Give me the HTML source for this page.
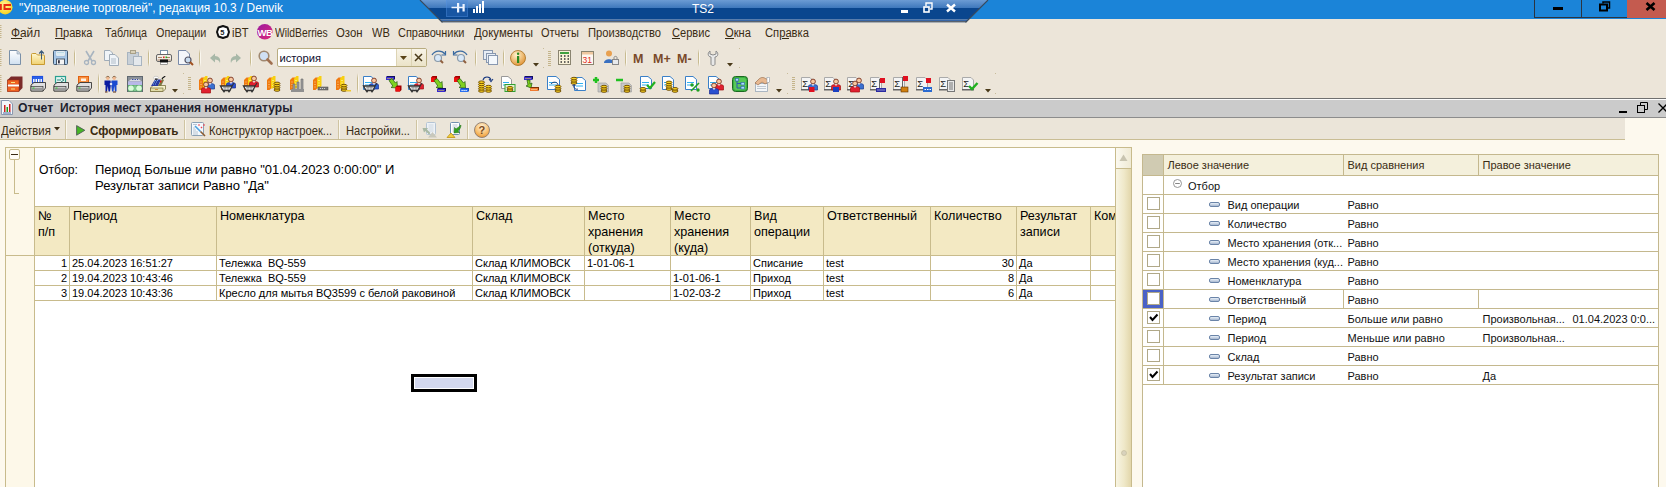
<!DOCTYPE html><html><head><meta charset="utf-8"><style>
*{margin:0;padding:0;box-sizing:border-box}
html,body{width:1666px;height:487px;overflow:hidden;background:#fdf9ee;font-family:"Liberation Sans",sans-serif;position:relative}
.a{position:absolute}
.t{position:absolute;white-space:pre;line-height:1}
svg{position:absolute;overflow:visible}
</style></head><body><div class="a" style="left:0px;top:0px;width:1666px;height:19px;background:#1b84d8"></div>
<div class="a" style="left:0px;top:19px;width:1666px;height:79px;background:#ece5d9"></div>
<div class="a" style="left:0px;top:98px;width:1666px;height:1px;background:#707070"></div>
<div class="a" style="left:0px;top:99px;width:1666px;height:1px;background:#fcfcfc"></div>
<svg style="left:0px;top:0px" width="14" height="18" viewBox="0 0 14 18"><defs><radialGradient id="c1g" cx="0.45" cy="0.35" r="0.7"><stop offset="0" stop-color="#fff6a0"/><stop offset="1" stop-color="#f8d010"/></radialGradient></defs><circle cx="5.2" cy="7.2" r="7.3" fill="url(#c1g)"/><rect x="0" y="4" width="1.8" height="6" fill="#e82a10"/><path d="M11 5 H4.5 V9 H11" fill="none" stroke="#e82a10" stroke-width="2"/></svg>
<div class="t" style="left:18.5px;top:2.14px;font-size:12px;color:#fff;font-weight:400;transform:scaleX(0.9896);transform-origin:0 0;">"Управление торговлей", редакция 10.3 / Denvik</div>
<div class="a" style="left:1534px;top:0px;width:93px;height:18px;border-left:1px solid #2b3440;border-bottom:1px solid #2b3440;background:#1b84d8"></div>
<div class="a" style="left:1581px;top:0px;width:1px;height:18px;background:#2b3440"></div>
<div class="a" style="left:1627px;top:0px;width:39px;height:18px;background:#c45b4f"></div>
<div class="a" style="left:1553px;top:7px;width:10px;height:3px;background:#000"></div>
<svg style="left:1599px;top:1px" width="12" height="11" viewBox="0 0 12 11"><rect x="1" y="3.5" width="7" height="6" fill="none" stroke="#000" stroke-width="2"/><path d="M4 2.5 V1 H10.5 V7 H9" fill="none" stroke="#000" stroke-width="1.5"/></svg>
<svg style="left:1645px;top:2px" width="11" height="9" viewBox="0 0 11 9"><path d="M1.5 1 L9.5 8 M9.5 1 L1.5 8" stroke="#000" stroke-width="2.6"/></svg>
<svg style="left:418px;top:0px" width="572" height="24" viewBox="0 0 572 24"><defs><linearGradient id="rg" x1="0" y1="0" x2="0" y2="1">
<stop offset="0" stop-color="#6c9cd4"/><stop offset="1" stop-color="#3e78bc"/></linearGradient>
<clipPath id="rc"><polygon points="2,0 570,0 547,23 25,23"/></clipPath></defs>
<g clip-path="url(#rc)"><rect x="0" y="0" width="572" height="8" fill="url(#rg)"/><rect x="0" y="8" width="572" height="11.5" fill="#0a468e"/>
<rect x="0" y="19.5" width="572" height="1.5" fill="#3866a6"/><rect x="0" y="21" width="572" height="1" fill="#5a626c"/><rect x="0" y="22" width="572" height="1" fill="#a8aeb4"/></g>
<path d="M2 0 L24.5 22.5 M570 0 L547.5 22.5" stroke="#3a4a5c" stroke-width="1.1"/></svg>
<div class="a" style="left:446px;top:0px;width:22px;height:17px;background:rgba(60,130,220,0.28);border:1px solid rgba(90,150,230,0.35);border-top:none"></div>
<svg style="left:451px;top:3px" width="15" height="10" viewBox="0 0 15 10"><path d="M0.5 4.5 H7 M12 4.5 H7" stroke="#eef4ff" stroke-width="1.6"/><rect x="6" y="0" width="2.2" height="9.5" fill="#eef4ff"/><rect x="11.5" y="1" width="2.2" height="7.5" fill="#eef4ff"/></svg>
<svg style="left:473px;top:1px" width="12" height="12" viewBox="0 0 12 12"><rect x="0" y="8" width="2" height="4" fill="#fff"/><rect x="3" y="5" width="2" height="7" fill="#fff"/><rect x="6" y="3" width="2" height="9" fill="#fff"/><rect x="9" y="0" width="2" height="12" fill="#fff"/></svg>
<div class="t" style="left:692px;top:2.84px;font-size:12px;color:#fff;font-weight:400;">TS2</div>
<div class="a" style="left:901px;top:10px;width:7px;height:2.5px;background:#fff"></div>
<svg style="left:923px;top:2px" width="10" height="11" viewBox="0 0 10 11"><rect x="1" y="5" width="5" height="5" fill="none" stroke="#fff" stroke-width="1.6"/><path d="M3 4 V1 H9 V7 H7" fill="none" stroke="#fff" stroke-width="1.4"/></svg>
<svg style="left:946px;top:4px" width="10" height="8" viewBox="0 0 10 8"><path d="M1 0.5 L9 7.5 M9 0.5 L1 7.5" stroke="#fff" stroke-width="2.4"/></svg>
<div class="t" style="left:10.7px;top:26.84px;font-size:12px;color:#3a2c14;font-weight:400;transform:scaleX(0.9889);transform-origin:0 0;">Файл</div>
<div class="t" style="left:54.7px;top:26.84px;font-size:12px;color:#3a2c14;font-weight:400;transform:scaleX(0.9255);transform-origin:0 0;">Правка</div>
<div class="t" style="left:105.1px;top:26.84px;font-size:12px;color:#3a2c14;font-weight:400;transform:scaleX(0.8944);transform-origin:0 0;">Таблица</div>
<div class="t" style="left:156.0px;top:26.84px;font-size:12px;color:#3a2c14;font-weight:400;transform:scaleX(0.8977);transform-origin:0 0;">Операции</div>
<div class="t" style="left:232.2px;top:26.84px;font-size:12px;color:#3a2c14;font-weight:400;transform:scaleX(0.9235);transform-origin:0 0;">iBT</div>
<div class="t" style="left:274.8px;top:26.84px;font-size:12px;color:#3a2c14;font-weight:400;transform:scaleX(0.8601);transform-origin:0 0;">WildBerries</div>
<div class="t" style="left:336.2px;top:26.84px;font-size:12px;color:#3a2c14;font-weight:400;transform:scaleX(0.9476);transform-origin:0 0;">Озон</div>
<div class="t" style="left:371.5px;top:26.84px;font-size:12px;color:#3a2c14;font-weight:400;transform:scaleX(0.9267);transform-origin:0 0;">WB</div>
<div class="t" style="left:398.0px;top:26.84px;font-size:12px;color:#3a2c14;font-weight:400;transform:scaleX(0.9135);transform-origin:0 0;">Справочники</div>
<div class="t" style="left:473.5px;top:26.84px;font-size:12px;color:#3a2c14;font-weight:400;transform:scaleX(0.9530);transform-origin:0 0;">Документы</div>
<div class="t" style="left:540.5px;top:26.84px;font-size:12px;color:#3a2c14;font-weight:400;transform:scaleX(0.9139);transform-origin:0 0;">Отчеты</div>
<div class="t" style="left:587.5px;top:26.84px;font-size:12px;color:#3a2c14;font-weight:400;transform:scaleX(0.9320);transform-origin:0 0;">Производство</div>
<div class="t" style="left:671.5px;top:26.84px;font-size:12px;color:#3a2c14;font-weight:400;transform:scaleX(0.9228);transform-origin:0 0;">Сервис</div>
<div class="t" style="left:724.5px;top:26.84px;font-size:12px;color:#3a2c14;font-weight:400;transform:scaleX(0.9297);transform-origin:0 0;">Окна</div>
<div class="t" style="left:764.5px;top:26.84px;font-size:12px;color:#3a2c14;font-weight:400;transform:scaleX(0.9332);transform-origin:0 0;">Справка</div>
<div class="a" style="left:11px;top:38px;width:11px;height:1px;background:#3a2c14"></div>
<div class="a" style="left:55px;top:38px;width:9px;height:1px;background:#3a2c14"></div>
<div class="a" style="left:672px;top:38px;width:8px;height:1px;background:#3a2c14"></div>
<div class="a" style="left:725px;top:38px;width:9px;height:1px;background:#3a2c14"></div>
<div class="a" style="left:782px;top:38px;width:7px;height:1px;background:#3a2c14"></div>
<svg style="left:216px;top:25px" width="14" height="14" viewBox="0 0 14 14"><polygon points="7,1 11.5,2.5 13,7 11.5,11.5 7,13 2.5,11.5 1,7 2.5,2.5" fill="#fff" stroke="#111" stroke-width="2" stroke-linejoin="round"/><text x="4.3" y="10" font-size="7.5" font-weight="700" font-family="Liberation Sans" fill="#222">5</text></svg>
<svg style="left:257px;top:24px" width="16" height="16" viewBox="0 0 16 16"><defs><linearGradient id="wbg" x1="0" y1="0" x2="1" y2="1"><stop offset="0" stop-color="#9a1aa0"/><stop offset="1" stop-color="#e02a7a"/></linearGradient></defs><circle cx="7.8" cy="7.8" r="7.8" fill="url(#wbg)"/><text x="0.6" y="11.5" font-size="9.5" font-weight="700" font-family="Liberation Sans" fill="#fff" letter-spacing="-0.6">WB</text></svg>
<div class="a" style="left:0px;top:100px;width:1666px;height:17px;background:#cbcbcb"></div>
<div class="a" style="left:0px;top:117px;width:1666px;height:1px;background:#8c8c8c"></div>
<svg style="left:1px;top:100px" width="12" height="15" viewBox="0 0 12 15"><path d="M0.5 0.5 H8 L11.5 4 V14.5 H0.5 Z" fill="#f4f6fa" stroke="#8a98b0"/><rect x="3" y="5" width="1.5" height="7" fill="#d02020"/><rect x="5.5" y="7" width="1.5" height="5" fill="#20a020"/><rect x="8" y="4" width="1.5" height="8" fill="#d02020"/><rect x="2" y="12.5" width="8" height="1" fill="#4a6aa0"/></svg>
<div class="t" style="left:17.6px;top:101.84px;font-size:12px;color:#1e1e2e;font-weight:700;transform:scaleX(1.0155);transform-origin:0 0;">Отчет</div>
<div class="t" style="left:60.3px;top:101.84px;font-size:12px;color:#1e1e2e;font-weight:700;transform:scaleX(1.0010);transform-origin:0 0;">История мест хранения номенклатуры</div>
<div class="a" style="left:1619px;top:111px;width:8px;height:2px;background:#000"></div>
<svg style="left:1637px;top:102px" width="12" height="12" viewBox="0 0 12 12"><rect x="0.5" y="3.5" width="7" height="7" fill="none" stroke="#000"/><path d="M3.5 3.5 V0.5 H10.5 V7.5 H7.5" fill="none" stroke="#000"/></svg>
<svg style="left:1658px;top:103px" width="10" height="10" viewBox="0 0 10 10"><path d="M0.5 0.5 L9.5 9.5 M9.5 0.5 L0.5 9.5" stroke="#000" stroke-width="1.3"/></svg>
<div class="a" style="left:0px;top:118px;width:1625px;height:22px;background:#ebe5d9;border-bottom:1px solid #c9bd94"></div>
<div class="t" style="left:0.7px;top:124.84px;font-size:12px;color:#3a2c14;font-weight:400;transform:scaleX(0.9481);transform-origin:0 0;">Действия</div>
<svg style="left:54px;top:127px" width="7" height="4" viewBox="0 0 7 4"><path d="M0 0 H6 L3 3.5 Z" fill="#3a2c14"/></svg>
<div class="a" style="left:65px;top:120px;width:2px;height:19px;background:linear-gradient(90deg,#cfc4a2 50%,#faf7ee 50%)"></div>
<div class="a" style="left:184px;top:120px;width:2px;height:19px;background:linear-gradient(90deg,#cfc4a2 50%,#faf7ee 50%)"></div>
<div class="a" style="left:338px;top:120px;width:2px;height:19px;background:linear-gradient(90deg,#cfc4a2 50%,#faf7ee 50%)"></div>
<div class="a" style="left:416px;top:120px;width:2px;height:19px;background:linear-gradient(90deg,#cfc4a2 50%,#faf7ee 50%)"></div>
<div class="a" style="left:467px;top:120px;width:2px;height:19px;background:linear-gradient(90deg,#cfc4a2 50%,#faf7ee 50%)"></div>
<svg style="left:76px;top:125px" width="10" height="11" viewBox="0 0 10 11"><path d="M0.6 0.6 L8.8 5.3 L0.6 10.2 Z" fill="#46b626" stroke="#505a58" stroke-width="0.9" stroke-linejoin="round"/></svg>
<div class="t" style="left:89.5px;top:124.84px;font-size:12px;color:#3a2a10;font-weight:700;transform:scaleX(0.9677);transform-origin:0 0;">Сформировать</div>
<svg style="left:191px;top:122px" width="16" height="15" viewBox="0 0 16 15"><rect x="0.5" y="0.5" width="12" height="13" rx="1" fill="#f4f8fc" stroke="#8aa0b4"/><path d="M2 2.5 H6 M2 6 H4 M2 8 H5 M2 10 H7 M2 12 H7" stroke="#a8b8c8" stroke-width="0.8"/><path d="M4 4 L9.5 9.5" stroke="#4aa0e0" stroke-width="1.6"/><path d="M9.5 9.5 L14 14" stroke="#8a5a30" stroke-width="1.6"/><path d="M8 2 L9 3 L8 4 L7 3 Z M13 2 L14 3 L13 4 L12 3 Z M10.5 4.5 L11.5 5.5 L10.5 6.5 L9.5 5.5 Z" fill="#f04050"/></svg>
<div class="t" style="left:209px;top:124.84px;font-size:12px;color:#3a2c14;font-weight:400;transform:scaleX(0.9340);transform-origin:0 0;">Конструктор настроек...</div>
<div class="t" style="left:346px;top:124.84px;font-size:12px;color:#3a2c14;font-weight:400;transform:scaleX(0.9286);transform-origin:0 0;">Настройки...</div>
<svg style="left:422px;top:122px" width="17" height="16" viewBox="0 0 17 16"><rect x="4.5" y="0.5" width="9" height="12" rx="1" fill="#eef2f6" stroke="#b4c4d4"/><path d="M6.5 3 H11.5 M6.5 5 H11.5 M6.5 7 H11.5 M6.5 9 H11.5" stroke="#c4d0dc" stroke-width="0.8"/><path d="M0.5 6 H6 L5 7.5 L8.5 11 L7 12.5 L3.5 9 L2 10.5 Z" fill="#a8b8a4"/><path d="M6 15.5 L10.5 10 L15 15.5 Z" fill="#c8c8bc"/></svg>
<svg style="left:446px;top:122px" width="17" height="16" viewBox="0 0 17 16"><rect x="4.5" y="0.5" width="9" height="12" rx="1" fill="#fff" stroke="#7090b0"/><path d="M6.5 3 H11.5 M6.5 5 H11.5 M6.5 7 H10 M6.5 9 H9" stroke="#a8b8cc" stroke-width="0.8"/><path d="M15 3 C15 6 13 8 12 9 L13.5 10.5 L8 11 L8.5 5.5 L10 7 C11 6 13 5 15 3 Z" fill="#30a020" stroke="#1a6a10" stroke-width="0.5"/><path d="M1 15.5 L5 11 L9 15.5 Z" fill="#f0d040" stroke="#c09010" stroke-width="0.8"/></svg>
<svg style="left:474px;top:122px" width="17" height="17" viewBox="0 0 17 17"><defs><radialGradient id="qg" cx="0.5" cy="0.3" r="0.75"><stop offset="0" stop-color="#fff4dc"/><stop offset="0.6" stop-color="#f8c070"/><stop offset="1" stop-color="#e89028"/></radialGradient></defs><circle cx="8" cy="8" r="7.5" fill="url(#qg)" stroke="#8a7a70" stroke-width="0.9"/><text x="4.6" y="12.3" font-size="11" font-weight="700" font-family="Liberation Sans" fill="#7a4a20">?</text></svg>
<div class="a" style="left:5px;top:147px;width:1127px;height:345px;border:1px solid #c8bb8c;background:#fff"></div>
<div class="a" style="left:6px;top:148px;width:28px;height:339px;background:#fdf8e9"></div>
<div class="a" style="left:34px;top:148px;width:1px;height:339px;background:#c8bb8c"></div>
<div class="a" style="left:6px;top:255px;width:29px;height:1px;background:#c8bb8c"></div>
<div class="a" style="left:9px;top:149px;width:11px;height:11px;border:1px solid #c8bb8c;background:#fffdf6;border-radius:2px"></div>
<div class="a" style="left:11px;top:153.5px;width:7px;height:1.5px;background:#3a2c14"></div>
<div class="a" style="left:14px;top:160px;width:1px;height:33px;background:#c8bb8c"></div>
<div class="a" style="left:14px;top:193px;width:5px;height:1px;background:#c8bb8c"></div>
<div class="t" style="left:38.5px;top:162.57px;font-size:13.5px;color:#000;font-weight:400;transform:scaleX(0.9031);transform-origin:0 0;">Отбор:</div>
<div class="t" style="left:95.3px;top:162.57px;font-size:13.5px;color:#000;font-weight:400;transform:scaleX(0.9617);transform-origin:0 0;">Период Больше или равно "01.04.2023 0:00:00" И</div>
<div class="t" style="left:95.3px;top:178.57px;font-size:13.5px;color:#000;font-weight:400;transform:scaleX(0.9663);transform-origin:0 0;">Результат записи Равно "Да"</div>
<div class="a" style="left:35px;top:206px;width:1080px;height:49px;background:#f3e9c3"></div>
<div class="a" style="left:35px;top:206px;width:1080px;height:1px;background:#c8bb8c"></div>
<div class="a" style="left:35px;top:255px;width:1080px;height:1px;background:#c8bb8c"></div>
<div class="a" style="left:35px;top:270px;width:1080px;height:1px;background:#c8bb8c"></div>
<div class="a" style="left:35px;top:285px;width:1080px;height:1px;background:#c8bb8c"></div>
<div class="a" style="left:35px;top:300px;width:1080px;height:1px;background:#c8bb8c"></div>
<div class="a" style="left:69px;top:206px;width:1px;height:95px;background:#c8bb8c"></div>
<div class="a" style="left:216px;top:206px;width:1px;height:95px;background:#c8bb8c"></div>
<div class="a" style="left:472px;top:206px;width:1px;height:95px;background:#c8bb8c"></div>
<div class="a" style="left:584px;top:206px;width:1px;height:95px;background:#c8bb8c"></div>
<div class="a" style="left:670px;top:206px;width:1px;height:95px;background:#c8bb8c"></div>
<div class="a" style="left:750px;top:206px;width:1px;height:95px;background:#c8bb8c"></div>
<div class="a" style="left:823px;top:206px;width:1px;height:95px;background:#c8bb8c"></div>
<div class="a" style="left:930px;top:206px;width:1px;height:95px;background:#c8bb8c"></div>
<div class="a" style="left:1016px;top:206px;width:1px;height:95px;background:#c8bb8c"></div>
<div class="a" style="left:1090px;top:206px;width:1px;height:95px;background:#c8bb8c"></div>
<div class="t" style="left:38px;top:210.33px;font-size:12.6px;color:#000;font-weight:400;">№</div>
<div class="t" style="left:38px;top:226.33px;font-size:12.6px;color:#000;font-weight:400;">п/п</div>
<div class="t" style="left:73px;top:210.33px;font-size:12.6px;color:#000;font-weight:400;">Период</div>
<div class="t" style="left:220px;top:210.33px;font-size:12.6px;color:#000;font-weight:400;">Номенклатура</div>
<div class="t" style="left:476px;top:210.33px;font-size:12.6px;color:#000;font-weight:400;">Склад</div>
<div class="t" style="left:588px;top:210.33px;font-size:12.6px;color:#000;font-weight:400;">Место</div>
<div class="t" style="left:588px;top:226.33px;font-size:12.6px;color:#000;font-weight:400;">хранения</div>
<div class="t" style="left:588px;top:242.33px;font-size:12.6px;color:#000;font-weight:400;">(откуда)</div>
<div class="t" style="left:674px;top:210.33px;font-size:12.6px;color:#000;font-weight:400;">Место</div>
<div class="t" style="left:674px;top:226.33px;font-size:12.6px;color:#000;font-weight:400;">хранения</div>
<div class="t" style="left:674px;top:242.33px;font-size:12.6px;color:#000;font-weight:400;">(куда)</div>
<div class="t" style="left:754px;top:210.33px;font-size:12.6px;color:#000;font-weight:400;">Вид</div>
<div class="t" style="left:754px;top:226.33px;font-size:12.6px;color:#000;font-weight:400;">операции</div>
<div class="t" style="left:827px;top:210.33px;font-size:12.6px;color:#000;font-weight:400;">Ответственный</div>
<div class="t" style="left:934px;top:210.33px;font-size:12.6px;color:#000;font-weight:400;">Количество</div>
<div class="t" style="left:1020px;top:210.33px;font-size:12.6px;color:#000;font-weight:400;">Результат</div>
<div class="t" style="left:1020px;top:226.33px;font-size:12.6px;color:#000;font-weight:400;">записи</div>
<div class="t" style="left:1094px;top:210.33px;font-size:12.6px;color:#000;font-weight:400;">Ком</div>
<div class="t" style="left:34px;width:33px;top:257.69px;font-size:11px;text-align:right">1</div>
<div class="t" style="left:72px;top:257.69px;font-size:11px;color:#000;font-weight:400;">25.04.2023 16:51:27</div>
<div class="t" style="left:219px;top:257.69px;font-size:11px;color:#000;font-weight:400;">Тележка  BQ-559</div>
<div class="t" style="left:475px;top:257.69px;font-size:11px;color:#000;font-weight:400;">Склад КЛИМОВСК</div>
<div class="t" style="left:587px;top:257.69px;font-size:11px;color:#000;font-weight:400;">1-01-06-1</div>
<div class="t" style="left:753px;top:257.69px;font-size:11px;color:#000;font-weight:400;">Списание</div>
<div class="t" style="left:826px;top:257.69px;font-size:11px;color:#000;font-weight:400;">test</div>
<div class="t" style="left:930px;width:84px;top:257.69px;font-size:11px;text-align:right">30</div>
<div class="t" style="left:1019px;top:257.69px;font-size:11px;color:#000;font-weight:400;">Да</div>
<div class="t" style="left:34px;width:33px;top:272.69px;font-size:11px;text-align:right">2</div>
<div class="t" style="left:72px;top:272.69px;font-size:11px;color:#000;font-weight:400;">19.04.2023 10:43:46</div>
<div class="t" style="left:219px;top:272.69px;font-size:11px;color:#000;font-weight:400;">Тележка  BQ-559</div>
<div class="t" style="left:475px;top:272.69px;font-size:11px;color:#000;font-weight:400;">Склад КЛИМОВСК</div>
<div class="t" style="left:673px;top:272.69px;font-size:11px;color:#000;font-weight:400;">1-01-06-1</div>
<div class="t" style="left:753px;top:272.69px;font-size:11px;color:#000;font-weight:400;">Приход</div>
<div class="t" style="left:826px;top:272.69px;font-size:11px;color:#000;font-weight:400;">test</div>
<div class="t" style="left:930px;width:84px;top:272.69px;font-size:11px;text-align:right">8</div>
<div class="t" style="left:1019px;top:272.69px;font-size:11px;color:#000;font-weight:400;">Да</div>
<div class="t" style="left:34px;width:33px;top:287.69px;font-size:11px;text-align:right">3</div>
<div class="t" style="left:72px;top:287.69px;font-size:11px;color:#000;font-weight:400;">19.04.2023 10:43:36</div>
<div class="t" style="left:219px;top:287.69px;font-size:11px;color:#000;font-weight:400;">Кресло для мытья BQ3599 с белой раковиной</div>
<div class="t" style="left:475px;top:287.69px;font-size:11px;color:#000;font-weight:400;">Склад КЛИМОВСК</div>
<div class="t" style="left:673px;top:287.69px;font-size:11px;color:#000;font-weight:400;">1-02-03-2</div>
<div class="t" style="left:753px;top:287.69px;font-size:11px;color:#000;font-weight:400;">Приход</div>
<div class="t" style="left:826px;top:287.69px;font-size:11px;color:#000;font-weight:400;">test</div>
<div class="t" style="left:930px;width:84px;top:287.69px;font-size:11px;text-align:right">6</div>
<div class="t" style="left:1019px;top:287.69px;font-size:11px;color:#000;font-weight:400;">Да</div>
<div class="a" style="left:411px;top:374px;width:66px;height:18px;border:3px solid #000;background:#fff"></div>
<div class="a" style="left:415px;top:378px;width:58px;height:10px;background:#d3d8ee"></div>
<div class="a" style="left:1115px;top:148px;width:16px;height:339px;border-left:1px solid #c8bb8c;background:linear-gradient(90deg,#f8f5e4,#efe8c8 55%,#e2d6aa)"></div>
<div class="a" style="left:1116px;top:148px;width:15px;height:21px;background:linear-gradient(90deg,#fbf9f0,#efead4);border-bottom:1px solid #c8bb8c"></div>
<svg style="left:1119px;top:154px" width="9" height="8" viewBox="0 0 9 8"><path d="M0.5 7 L4.5 0.5 L8.5 7 Z" fill="#c8c4b0"/></svg>
<svg style="left:1120px;top:449px" width="8" height="8" viewBox="0 0 8 8"><circle cx="4" cy="4" r="2.5" fill="#d8d2bc" stroke="#c0b898" stroke-width="0.6"/></svg>
<div class="a" style="left:1142px;top:154px;width:517px;height:340px;border:1px solid #c4b88e;background:#fff"></div>
<div class="a" style="left:1143px;top:155px;width:515px;height:20px;background:#f4f0dc"></div>
<div class="a" style="left:1143px;top:155px;width:20px;height:20px;background:#d0cbb2"></div>
<div class="a" style="left:1143px;top:175px;width:515px;height:1px;background:#c4b88e"></div>
<div class="a" style="left:1163px;top:155px;width:1px;height:229px;background:#c4b88e"></div>
<div class="a" style="left:1343px;top:155px;width:1px;height:20px;background:#c4b88e"></div>
<div class="a" style="left:1478px;top:155px;width:1px;height:20px;background:#c4b88e"></div>
<div class="t" style="left:1167.5px;top:159.69px;font-size:11px;color:#3a2c14;font-weight:400;">Левое значение</div>
<div class="t" style="left:1347.5px;top:159.69px;font-size:11px;color:#3a2c14;font-weight:400;">Вид сравнения</div>
<div class="t" style="left:1482.5px;top:159.69px;font-size:11px;color:#3a2c14;font-weight:400;">Правое значение</div>
<div class="a" style="left:1143px;top:194px;width:515px;height:1px;background:#c4b88e"></div>
<div class="a" style="left:1143px;top:213px;width:515px;height:1px;background:#c4b88e"></div>
<div class="a" style="left:1143px;top:232px;width:515px;height:1px;background:#c4b88e"></div>
<div class="a" style="left:1143px;top:251px;width:515px;height:1px;background:#c4b88e"></div>
<div class="a" style="left:1143px;top:270px;width:515px;height:1px;background:#c4b88e"></div>
<div class="a" style="left:1143px;top:289px;width:515px;height:1px;background:#c4b88e"></div>
<div class="a" style="left:1143px;top:308px;width:515px;height:1px;background:#c4b88e"></div>
<div class="a" style="left:1143px;top:327px;width:515px;height:1px;background:#c4b88e"></div>
<div class="a" style="left:1143px;top:346px;width:515px;height:1px;background:#c4b88e"></div>
<div class="a" style="left:1143px;top:365px;width:515px;height:1px;background:#c4b88e"></div>
<div class="a" style="left:1143px;top:384px;width:515px;height:1px;background:#c4b88e"></div>
<svg style="left:1173px;top:179px" width="9" height="9" viewBox="0 0 9 9"><circle cx="4.5" cy="4.5" r="4" fill="#fff" stroke="#8a8a8a" stroke-width="0.9"/><path d="M2.2 4.5 H6.8" stroke="#777" stroke-width="0.9"/></svg>
<div class="t" style="left:1188px;top:180.69px;font-size:11px;color:#111;font-weight:400;">Отбор</div>
<div class="a" style="left:1147px;top:197px;width:13px;height:13px;border:1px solid #b0a888;background:#fff"></div>
<div class="a" style="left:1209px;top:202px;width:11px;height:5px;background:linear-gradient(#e8f0f8,#a8b8d0);border:1px solid #6a84a8;border-radius:2px"></div>
<div class="t" style="left:1227.5px;top:199.69px;font-size:11px;color:#111;font-weight:400;">Вид операции</div>
<div class="t" style="left:1347.5px;top:199.69px;font-size:11px;color:#111;font-weight:400;">Равно</div>
<div class="a" style="left:1147px;top:216px;width:13px;height:13px;border:1px solid #b0a888;background:#fff"></div>
<div class="a" style="left:1209px;top:221px;width:11px;height:5px;background:linear-gradient(#e8f0f8,#a8b8d0);border:1px solid #6a84a8;border-radius:2px"></div>
<div class="t" style="left:1227.5px;top:218.69px;font-size:11px;color:#111;font-weight:400;">Количество</div>
<div class="t" style="left:1347.5px;top:218.69px;font-size:11px;color:#111;font-weight:400;">Равно</div>
<div class="a" style="left:1147px;top:235px;width:13px;height:13px;border:1px solid #b0a888;background:#fff"></div>
<div class="a" style="left:1209px;top:240px;width:11px;height:5px;background:linear-gradient(#e8f0f8,#a8b8d0);border:1px solid #6a84a8;border-radius:2px"></div>
<div class="t" style="left:1227.5px;top:237.69px;font-size:11px;color:#111;font-weight:400;">Место хранения (отк...</div>
<div class="t" style="left:1347.5px;top:237.69px;font-size:11px;color:#111;font-weight:400;">Равно</div>
<div class="a" style="left:1147px;top:254px;width:13px;height:13px;border:1px solid #b0a888;background:#fff"></div>
<div class="a" style="left:1209px;top:259px;width:11px;height:5px;background:linear-gradient(#e8f0f8,#a8b8d0);border:1px solid #6a84a8;border-radius:2px"></div>
<div class="t" style="left:1227.5px;top:256.69px;font-size:11px;color:#111;font-weight:400;">Место хранения (куд...</div>
<div class="t" style="left:1347.5px;top:256.69px;font-size:11px;color:#111;font-weight:400;">Равно</div>
<div class="a" style="left:1147px;top:273px;width:13px;height:13px;border:1px solid #b0a888;background:#fff"></div>
<div class="a" style="left:1209px;top:278px;width:11px;height:5px;background:linear-gradient(#e8f0f8,#a8b8d0);border:1px solid #6a84a8;border-radius:2px"></div>
<div class="t" style="left:1227.5px;top:275.69px;font-size:11px;color:#111;font-weight:400;">Номенклатура</div>
<div class="t" style="left:1347.5px;top:275.69px;font-size:11px;color:#111;font-weight:400;">Равно</div>
<div class="a" style="left:1143px;top:290px;width:20px;height:18px;background:#4a62c6"></div>
<div class="a" style="left:1147px;top:292px;width:13px;height:13px;border:1px solid #b0a888;background:#fff"></div>
<div class="a" style="left:1209px;top:297px;width:11px;height:5px;background:linear-gradient(#e8f0f8,#a8b8d0);border:1px solid #6a84a8;border-radius:2px"></div>
<div class="t" style="left:1227.5px;top:294.69px;font-size:11px;color:#111;font-weight:400;">Ответственный</div>
<div class="t" style="left:1347.5px;top:294.69px;font-size:11px;color:#111;font-weight:400;">Равно</div>
<div class="a" style="left:1343px;top:289px;width:1px;height:19px;background:#c4b88e"></div>
<div class="a" style="left:1478px;top:289px;width:1px;height:19px;background:#c4b88e"></div>
<div class="a" style="left:1147px;top:311px;width:13px;height:13px;border:1px solid #b0a888;background:#fff"></div>
<svg style="left:1149px;top:313px" width="10" height="9" viewBox="0 0 10 9"><path d="M1 4 L3.5 7 L8.5 1.5" fill="none" stroke="#000" stroke-width="2"/></svg>
<div class="a" style="left:1209px;top:316px;width:11px;height:5px;background:linear-gradient(#e8f0f8,#a8b8d0);border:1px solid #6a84a8;border-radius:2px"></div>
<div class="t" style="left:1227.5px;top:313.69px;font-size:11px;color:#111;font-weight:400;">Период</div>
<div class="t" style="left:1347.5px;top:313.69px;font-size:11px;color:#111;font-weight:400;">Больше или равно</div>
<div class="t" style="left:1482.5px;top:313.69px;font-size:11px;color:#111;font-weight:400;">Произвольная...</div>
<div class="t" style="left:1572.5px;top:313.69px;font-size:11px;color:#111;font-weight:400;">01.04.2023 0:0...</div>
<div class="a" style="left:1147px;top:330px;width:13px;height:13px;border:1px solid #b0a888;background:#fff"></div>
<div class="a" style="left:1209px;top:335px;width:11px;height:5px;background:linear-gradient(#e8f0f8,#a8b8d0);border:1px solid #6a84a8;border-radius:2px"></div>
<div class="t" style="left:1227.5px;top:332.69px;font-size:11px;color:#111;font-weight:400;">Период</div>
<div class="t" style="left:1347.5px;top:332.69px;font-size:11px;color:#111;font-weight:400;">Меньше или равно</div>
<div class="t" style="left:1482.5px;top:332.69px;font-size:11px;color:#111;font-weight:400;">Произвольная...</div>
<div class="a" style="left:1147px;top:349px;width:13px;height:13px;border:1px solid #b0a888;background:#fff"></div>
<div class="a" style="left:1209px;top:354px;width:11px;height:5px;background:linear-gradient(#e8f0f8,#a8b8d0);border:1px solid #6a84a8;border-radius:2px"></div>
<div class="t" style="left:1227.5px;top:351.69px;font-size:11px;color:#111;font-weight:400;">Склад</div>
<div class="t" style="left:1347.5px;top:351.69px;font-size:11px;color:#111;font-weight:400;">Равно</div>
<div class="a" style="left:1147px;top:368px;width:13px;height:13px;border:1px solid #b0a888;background:#fff"></div>
<svg style="left:1149px;top:370px" width="10" height="9" viewBox="0 0 10 9"><path d="M1 4 L3.5 7 L8.5 1.5" fill="none" stroke="#000" stroke-width="2"/></svg>
<div class="a" style="left:1209px;top:373px;width:11px;height:5px;background:linear-gradient(#e8f0f8,#a8b8d0);border:1px solid #6a84a8;border-radius:2px"></div>
<div class="t" style="left:1227.5px;top:370.69px;font-size:11px;color:#111;font-weight:400;">Результат записи</div>
<div class="t" style="left:1347.5px;top:370.69px;font-size:11px;color:#111;font-weight:400;">Равно</div>
<div class="t" style="left:1482.5px;top:370.69px;font-size:11px;color:#111;font-weight:400;">Да</div>
<svg style="left:8px;top:50px" width="16" height="16" viewBox="0 0 16 16"><defs><linearGradient id="ngr" x1="0" y1="0" x2="0" y2="1"><stop offset="0" stop-color="#fff"/><stop offset="1" stop-color="#d0e0f0"/></linearGradient></defs><path d="M1.5 0.5 H9 L12.5 4 V14.5 H1.5 Z" fill="url(#ngr)" stroke="#7a90a8"/><path d="M9 0.5 V4 H12.5" fill="#c8d4e0" stroke="#8a9ab0" stroke-width="0.6"/></svg>
<svg style="left:31px;top:50px" width="16" height="16" viewBox="0 0 16 16"><defs><linearGradient id="fgr" x1="0" y1="0" x2="0" y2="1"><stop offset="0" stop-color="#fff8d0"/><stop offset="1" stop-color="#f0d070"/></linearGradient></defs><path d="M0.5 4.5 Q0.5 3.5 1.5 3.5 H5 L6.5 5 H12.5 Q13.5 5 13.5 6 V14.5 H0.5 Z" fill="url(#fgr)" stroke="#c89a30"/><path d="M10.5 1.5 V9.5" stroke="#3a5a7a" stroke-width="1"/><path d="M8.3 3.5 L10.5 1 L12.7 3.5" stroke="#3a5a7a" stroke-width="1.3" fill="none"/></svg>
<svg style="left:53px;top:50px" width="16" height="16" viewBox="0 0 16 16"><rect x="0.5" y="0.5" width="14" height="14" rx="1" fill="#a8c8e8" stroke="#405870"/><rect x="3" y="1" width="9" height="5" fill="#fff" stroke="#8aa8c0" stroke-width="0.5"/><path d="M4 2.5 H11 M4 4 H11" stroke="#a8d0e0" stroke-width="0.8"/><rect x="3" y="8.5" width="9" height="6" fill="#4a5868"/><rect x="4" y="9.5" width="7" height="5" fill="#f4f4f4"/><rect x="5" y="10.2" width="1.8" height="3.2" fill="#334"/></svg>
<div class="a" style="left:74px;top:49px;width:1px;height:18px;background:linear-gradient(#ece5d9,#c8bb90 25%,#c8bb90 75%,#ece5d9)"></div>
<div class="a" style="left:75px;top:49px;width:1px;height:18px;background:linear-gradient(#ece5d9,#faf7ef 25%,#faf7ef 75%,#ece5d9)"></div>
<svg style="left:83px;top:50px" width="16" height="16" viewBox="0 0 16 16"><path d="M3 1 L9 11 M11 1 L5 11" stroke="#a8b4c0" stroke-width="1.6"/><circle cx="3.5" cy="12.5" r="2" fill="none" stroke="#a8b4c0" stroke-width="1.3"/><circle cx="10.5" cy="12.5" r="2" fill="none" stroke="#a8b4c0" stroke-width="1.3"/></svg>
<svg style="left:104px;top:50px" width="16" height="16" viewBox="0 0 16 16"><path d="M0.5 0.5 H6 L8.5 3 V10.5 H0.5 Z" fill="#f0f4f8" stroke="#a0acb8"/><path d="M5.5 4.5 H11 L14.5 8 V15.5 H5.5 Z" fill="#f0f4f8" stroke="#a0acb8"/><path d="M7 9 H12 M7 11 H12 M7 13 H12" stroke="#b0bcc8"/></svg>
<svg style="left:127px;top:50px" width="16" height="16" viewBox="0 0 16 16"><rect x="0.5" y="2.5" width="11" height="12" fill="#c8d0d8" stroke="#a8b4c0"/><rect x="3.5" y="0.5" width="5" height="3" fill="#d8d0b8" stroke="#a8a088"/><rect x="6.5" y="6.5" width="8" height="9" fill="#e4e8ec" stroke="#a8b4c0"/></svg>
<div class="a" style="left:148px;top:49px;width:1px;height:18px;background:linear-gradient(#ece5d9,#c8bb90 25%,#c8bb90 75%,#ece5d9)"></div>
<div class="a" style="left:149px;top:49px;width:1px;height:18px;background:linear-gradient(#ece5d9,#faf7ef 25%,#faf7ef 75%,#ece5d9)"></div>
<svg style="left:156px;top:50px" width="16" height="16" viewBox="0 0 16 16"><rect x="4.5" y="0.5" width="7" height="5" fill="#fff" stroke="#7a90a8"/><rect x="0.5" y="4.5" width="15" height="7" rx="1.5" fill="#f2ece4" stroke="#666"/><path d="M2 7.5 H6 M11 7.5 H14 M1.5 10 H14.5" stroke="#a07858" stroke-width="0.9"/><rect x="7" y="6.5" width="1.6" height="1.6" fill="#e02020"/><rect x="9.5" y="6.5" width="1.6" height="1.6" fill="#20b020"/><rect x="4" y="9.5" width="8" height="3" fill="#111"/><rect x="4.5" y="12.5" width="7" height="1.8" fill="#fff" stroke="#666" stroke-width="0.6"/></svg>
<svg style="left:178px;top:50px" width="16" height="16" viewBox="0 0 16 16"><path d="M0.5 0.5 H8 L11.5 4 V14.5 H0.5 Z" fill="#f4f6fa" stroke="#7a8aa8"/><circle cx="10" cy="10" r="3" fill="#c8dcf0" stroke="#556" stroke-width="1.2"/><path d="M12 12 L15 15" stroke="#a05020" stroke-width="2"/></svg>
<div class="a" style="left:199px;top:49px;width:1px;height:18px;background:linear-gradient(#ece5d9,#c8bb90 25%,#c8bb90 75%,#ece5d9)"></div>
<div class="a" style="left:200px;top:49px;width:1px;height:18px;background:linear-gradient(#ece5d9,#faf7ef 25%,#faf7ef 75%,#ece5d9)"></div>
<svg style="left:209px;top:52px" width="16" height="16" viewBox="0 0 16 16"><path d="M1 6 L6 1.5 V4 C10 4 12 7 11 11 C10 8 8.5 7.5 6 7.5 V10.5 Z" fill="#a8b8a8"/></svg>
<svg style="left:228px;top:52px" width="16" height="16" viewBox="0 0 16 16"><path d="M13 6 L8 1.5 V4 C4 4 2 7 3 11 C4 8 5.5 7.5 8 7.5 V10.5 Z" fill="#a8b8a8"/></svg>
<div class="a" style="left:250px;top:49px;width:1px;height:18px;background:linear-gradient(#ece5d9,#c8bb90 25%,#c8bb90 75%,#ece5d9)"></div>
<div class="a" style="left:251px;top:49px;width:1px;height:18px;background:linear-gradient(#ece5d9,#faf7ef 25%,#faf7ef 75%,#ece5d9)"></div>
<svg style="left:258px;top:50px" width="16" height="16" viewBox="0 0 16 16"><circle cx="6" cy="6" r="4.8" fill="#d0e0f4" stroke="#a08870" stroke-width="1.6"/><path d="M9.5 9.5 L13.5 13.5" stroke="#a07050" stroke-width="2.6" stroke-linecap="round"/></svg>
<svg style="left:0px;top:49px" width="2" height="18" viewBox="0 0 2 18"><rect x="0" y="0" width="1.5" height="1" fill="#c4b48a"/><rect x="0" y="2" width="1.5" height="1" fill="#c4b48a"/><rect x="0" y="4" width="1.5" height="1" fill="#c4b48a"/><rect x="0" y="6" width="1.5" height="1" fill="#c4b48a"/><rect x="0" y="8" width="1.5" height="1" fill="#c4b48a"/><rect x="0" y="10" width="1.5" height="1" fill="#c4b48a"/><rect x="0" y="12" width="1.5" height="1" fill="#c4b48a"/><rect x="0" y="14" width="1.5" height="1" fill="#c4b48a"/><rect x="0" y="16" width="1.5" height="1" fill="#c4b48a"/></svg>
<svg style="left:0px;top:25px" width="2" height="14" viewBox="0 0 2 14"><rect x="0" y="0" width="1.5" height="1" fill="#c4b48a"/><rect x="0" y="2" width="1.5" height="1" fill="#c4b48a"/><rect x="0" y="4" width="1.5" height="1" fill="#c4b48a"/><rect x="0" y="6" width="1.5" height="1" fill="#c4b48a"/><rect x="0" y="8" width="1.5" height="1" fill="#c4b48a"/><rect x="0" y="10" width="1.5" height="1" fill="#c4b48a"/><rect x="0" y="12" width="1.5" height="1" fill="#c4b48a"/></svg>
<div class="a" style="left:277px;top:48px;width:150px;height:19px;background:#fff;border:1px solid #b8ac80;border-radius:2px"></div>
<div class="a" style="left:396px;top:49px;width:15px;height:17px;background:linear-gradient(#f8f4e8,#ebe3c8);border-left:1px solid #ddd4b4"></div>
<div class="a" style="left:411px;top:49px;width:15px;height:17px;background:linear-gradient(#f8f4e8,#ebe3c8);border-left:1px solid #ddd4b4"></div>
<svg style="left:400px;top:56px" width="8" height="5" viewBox="0 0 8 5"><path d="M0 0 H7 L3.5 4 Z" fill="#5a4418"/></svg>
<svg style="left:414px;top:53px" width="9" height="9" viewBox="0 0 9 9"><path d="M1 1 L8 8 M8 1 L1 8" stroke="#4a3a1a" stroke-width="1.5"/></svg>
<div class="t" style="left:279.5px;top:52.52px;font-size:11.2px;color:#101030;font-weight:400;">история</div>
<svg style="left:431px;top:50px" width="16" height="16" viewBox="0 0 16 16"><path d="M1 5 C4 0 11 0 14 4" fill="none" stroke="#3a6aa0" stroke-width="1.3"/><path d="M14.5 1 V5 H10.5" fill="none" stroke="#3a6aa0" stroke-width="1.2"/><circle cx="7" cy="8" r="3.5" fill="#d8e8f8" stroke="#8a9aaa" stroke-width="1.2"/><path d="M9.5 10.5 L12 13" stroke="#906040" stroke-width="2"/></svg>
<svg style="left:453px;top:50px" width="16" height="16" viewBox="0 0 16 16"><path d="M14 5 C11 0 4 0 1 4" fill="none" stroke="#3a6aa0" stroke-width="1.3"/><path d="M0.5 1 V5 H4.5" fill="none" stroke="#3a6aa0" stroke-width="1.2"/><circle cx="8" cy="8" r="3.5" fill="#d8e8f8" stroke="#8a9aaa" stroke-width="1.2"/><path d="M10.5 10.5 L13 13" stroke="#906040" stroke-width="2"/></svg>
<div class="a" style="left:475px;top:49px;width:1px;height:18px;background:linear-gradient(#ece5d9,#c8bb90 25%,#c8bb90 75%,#ece5d9)"></div>
<div class="a" style="left:476px;top:49px;width:1px;height:18px;background:linear-gradient(#ece5d9,#faf7ef 25%,#faf7ef 75%,#ece5d9)"></div>
<svg style="left:483px;top:50px" width="16" height="16" viewBox="0 0 16 16"><rect x="0.5" y="0.5" width="9" height="9" fill="#e8eef6" stroke="#8898b0"/><rect x="3.5" y="3.5" width="9" height="9" fill="#e8eef6" stroke="#8898b0"/><rect x="5.5" y="5.5" width="9" height="9" fill="#f4f8fc" stroke="#8898b0"/></svg>
<div class="a" style="left:503px;top:49px;width:1px;height:18px;background:linear-gradient(#ece5d9,#c8bb90 25%,#c8bb90 75%,#ece5d9)"></div>
<div class="a" style="left:504px;top:49px;width:1px;height:18px;background:linear-gradient(#ece5d9,#faf7ef 25%,#faf7ef 75%,#ece5d9)"></div>
<svg style="left:510px;top:50px" width="16" height="16" viewBox="0 0 16 16"><defs><radialGradient id="ig" cx="0.4" cy="0.3" r="0.75"><stop offset="0" stop-color="#fff4d0"/><stop offset="1" stop-color="#e09030"/></radialGradient></defs><circle cx="8" cy="8" r="7.5" fill="url(#ig)" stroke="#a87020" stroke-width="0.8"/><rect x="7" y="6" width="2.2" height="7" fill="#2a8a20"/><circle cx="8.1" cy="3.8" r="1.2" fill="#2a8a20"/></svg>
<svg style="left:533px;top:63px" width="7" height="4" viewBox="0 0 7 4"><path d="M0 0 H6 L3 3.5 Z" fill="#4a3a1a"/></svg>
<svg style="left:543px;top:48px" width="1" height="20" viewBox="0 0 1 20"><rect x="0" y="0" width="1" height="1" fill="#c8bc9a"/><rect x="0" y="19" width="1" height="1" fill="#c8bc9a"/></svg>
<svg style="left:548px;top:51px" width="2" height="15" viewBox="0 0 2 15"><rect x="0" y="0" width="3" height="1" fill="#c4b48a"/><rect x="0" y="2" width="3" height="1" fill="#c4b48a"/><rect x="0" y="4" width="3" height="1" fill="#c4b48a"/><rect x="0" y="6" width="3" height="1" fill="#c4b48a"/><rect x="0" y="8" width="3" height="1" fill="#c4b48a"/><rect x="0" y="10" width="3" height="1" fill="#c4b48a"/><rect x="0" y="12" width="3" height="1" fill="#c4b48a"/><rect x="0" y="14" width="3" height="1" fill="#c4b48a"/></svg>
<svg style="left:558px;top:50px" width="16" height="16" viewBox="0 0 16 16"><rect x="0.5" y="0.5" width="12" height="14" fill="#f8f0d8" stroke="#8a8470"/><rect x="2" y="2" width="9" height="2" fill="#40a040"/><path d="M2.5 6 H4 M6 6 H7.5 M9.5 6 H11 M2.5 9 H4 M6 9 H7.5 M9.5 9 H11 M2.5 12 H4 M6 12 H7.5 M9.5 12 H11" stroke="#333" stroke-width="1.5"/></svg>
<svg style="left:581px;top:50px" width="16" height="16" viewBox="0 0 16 16"><rect x="0.5" y="1.5" width="12" height="13" fill="#fff8f0" stroke="#8a8470"/><rect x="1" y="2" width="11" height="2.5" fill="#f0c8a0"/><text x="1.5" y="13" font-size="8.5" font-family="Liberation Sans" fill="#e02a20">31</text></svg>
<svg style="left:604px;top:50px" width="16" height="16" viewBox="0 0 16 16"><circle cx="5" cy="3.5" r="3" fill="#e8a050"/><path d="M0 13 C0 8 10 8 10 13 Z" fill="#3a70c0"/><rect x="8.5" y="9.5" width="6" height="5" fill="#e8eaec" stroke="#888"/><path d="M10 9.5 V7.5 C10 6 13 6 13 7.5 V9.5" fill="none" stroke="#888"/></svg>
<div class="a" style="left:625px;top:49px;width:1px;height:18px;background:linear-gradient(#ece5d9,#c8bb90 25%,#c8bb90 75%,#ece5d9)"></div>
<div class="a" style="left:626px;top:49px;width:1px;height:18px;background:linear-gradient(#ece5d9,#faf7ef 25%,#faf7ef 75%,#ece5d9)"></div>
<svg style="left:633px;top:51px" width="20" height="16" viewBox="0 0 20 16"><text x="0" y="12" font-size="12.5" font-weight="700" font-family="Liberation Sans" fill="#7a4a2a">M</text></svg>
<svg style="left:653px;top:51px" width="22" height="16" viewBox="0 0 22 16"><text x="0" y="12" font-size="12.5" font-weight="700" font-family="Liberation Sans" fill="#7a4a2a">M+</text></svg>
<svg style="left:677px;top:51px" width="22" height="16" viewBox="0 0 22 16"><text x="0" y="12" font-size="12.5" font-weight="700" font-family="Liberation Sans" fill="#7a4a2a">M-</text></svg>
<div class="a" style="left:698px;top:49px;width:1px;height:18px;background:linear-gradient(#ece5d9,#c8bb90 25%,#c8bb90 75%,#ece5d9)"></div>
<div class="a" style="left:699px;top:49px;width:1px;height:18px;background:linear-gradient(#ece5d9,#faf7ef 25%,#faf7ef 75%,#ece5d9)"></div>
<svg style="left:707px;top:50px" width="16" height="16" viewBox="0 0 16 16"><path d="M3 1 C0 3 1 7 4 7 L4 14 C4 16 8 16 8 14 L8 7 C11 7 12 3 9 1 L9 4 L6 5 L3 4 Z" fill="#e8e8e8" stroke="#8a8a8a"/></svg>
<svg style="left:727px;top:63px" width="7" height="4" viewBox="0 0 7 4"><path d="M0 0 H6 L3 3.5 Z" fill="#4a3a1a"/></svg>
<svg style="left:739px;top:48px" width="1" height="20" viewBox="0 0 1 20"><rect x="0" y="0" width="1" height="1" fill="#c8bc9a"/><rect x="0" y="19" width="1" height="1" fill="#c8bc9a"/></svg>
<svg style="left:0px;top:75px" width="2" height="18" viewBox="0 0 2 18"><rect x="0" y="0" width="1.5" height="1" fill="#c4b48a"/><rect x="0" y="2" width="1.5" height="1" fill="#c4b48a"/><rect x="0" y="4" width="1.5" height="1" fill="#c4b48a"/><rect x="0" y="6" width="1.5" height="1" fill="#c4b48a"/><rect x="0" y="8" width="1.5" height="1" fill="#c4b48a"/><rect x="0" y="10" width="1.5" height="1" fill="#c4b48a"/><rect x="0" y="12" width="1.5" height="1" fill="#c4b48a"/><rect x="0" y="14" width="1.5" height="1" fill="#c4b48a"/><rect x="0" y="16" width="1.5" height="1" fill="#c4b48a"/></svg>
<svg style="left:7px;top:76px" width="16" height="16" viewBox="0 0 16 16"><path d="M4 0.5 H15.5 V12 L12 15.5 H0.5 V4 Z" fill="#7a2a2a"/><rect x="0.5" y="4" width="11.5" height="5" fill="#f06020" stroke="#a03010" stroke-width="0.6"/><rect x="0.5" y="10" width="11.5" height="5.5" fill="#f06020" stroke="#a03010" stroke-width="0.6"/><rect x="1" y="8.5" width="11" height="2" fill="#fff"/><rect x="4" y="6" width="4" height="1" fill="#f8e080"/><rect x="4" y="12.5" width="4" height="1" fill="#f8e080"/></svg>
<svg style="left:30px;top:76px" width="16" height="16" viewBox="0 0 16 16"><rect x="2.5" y="0.5" width="10" height="6.5" fill="#fff" stroke="#1e50e0" stroke-width="1.2"/><rect x="3" y="1" width="9" height="2" fill="#2a60e8"/><path d="M5 3 V7 M7.5 3 V7 M10 3 V7" stroke="#2a60e8"/><path d="M1 9 L4 6.5 H15.5 V12 L13 15 H1 Z" fill="#e0e0e0" stroke="#222" stroke-width="0.8"/><rect x="1" y="10.5" width="12" height="4.5" fill="#c8c8c8" stroke="#222" stroke-width="0.6"/><path d="M2 13 H12" stroke="#555" stroke-width="0.8"/><rect x="2.5" y="11.5" width="2" height="1" fill="#30d030"/></svg>
<svg style="left:53px;top:76px" width="16" height="16" viewBox="0 0 16 16"><rect x="2.5" y="0.5" width="10" height="6.5" fill="#e0f4f0" stroke="#2aa090" stroke-width="1.2"/><path d="M4 4 H8 M8 2 L11 4 L8 6" stroke="#2a8a80" fill="none"/><path d="M1 9 L4 6.5 H15.5 V12 L13 15 H1 Z" fill="#e0e0e0" stroke="#222" stroke-width="0.8"/><rect x="1" y="10.5" width="12" height="4.5" fill="#c8c8c8" stroke="#222" stroke-width="0.6"/><path d="M2 13 H12" stroke="#555" stroke-width="0.8"/><rect x="2.5" y="11.5" width="2" height="1" fill="#30d030"/></svg>
<svg style="left:76px;top:76px" width="16" height="16" viewBox="0 0 16 16"><rect x="2.5" y="0.5" width="10" height="6.5" fill="#f89040" stroke="#e06010" stroke-width="1"/><rect x="5" y="2.5" width="5" height="2.5" fill="#fff0e0"/><path d="M1 9 L4 6.5 H15.5 V12 L13 15 H1 Z" fill="#e0e0e0" stroke="#222" stroke-width="0.8"/><rect x="1" y="10.5" width="12" height="4.5" fill="#c8c8c8" stroke="#222" stroke-width="0.6"/><path d="M2 13 H12" stroke="#555" stroke-width="0.8"/><rect x="2.5" y="11.5" width="2" height="1" fill="#30d030"/></svg>
<div class="a" style="left:98px;top:73px;width:1px;height:21px;background:linear-gradient(#ece5d9,#c8bb90 25%,#c8bb90 75%,#ece5d9)"></div>
<div class="a" style="left:99px;top:73px;width:1px;height:21px;background:linear-gradient(#ece5d9,#faf7ef 25%,#faf7ef 75%,#ece5d9)"></div>
<svg style="left:104px;top:76px" width="16" height="16" viewBox="0 0 16 16"><circle cx="3.8" cy="2.2" r="1.7" fill="#f0b890"/><path d="M2 1.5 C2.5 0 5 0 5.5 1.5" stroke="#806040" fill="none"/><circle cx="10.2" cy="2.2" r="1.7" fill="#f0b890"/><path d="M8.5 1.5 C9 0 11.5 0 12 1.5" stroke="#806040" fill="none"/><path d="M0.5 9 V4.5 H6.5 L7 8 L6 15.5 H4.5 L3.8 10 L3 15.5 H1.5 V9 Z" fill="#0a1aa0"/><path d="M13.5 9 V4.5 H7.5 L7 8 L8 15.5 H9.5 L10.2 10 L11 15.5 H12.5 V9 Z" fill="#1a4ad0"/><path d="M5.5 8 L7 6.5 L8.5 8 L7 9.5 Z" fill="#fff"/><path d="M1 16 H3.5 M9 16 H12" stroke="#5a2a10"/></svg>
<svg style="left:127px;top:76px" width="16" height="16" viewBox="0 0 16 16"><rect x="0.5" y="0.5" width="15" height="15" fill="#c8ccd8" stroke="#606870"/><rect x="1" y="1" width="14" height="4.5" fill="#8a9098"/><path d="M2 5 C4 2 12 2 14 5 Z" fill="#d8dce4"/><path d="M5 3.5 H11" stroke="#3a4aa0" stroke-dasharray="1.5 1"/><rect x="1" y="5.5" width="14" height="3.5" fill="#b8b8e8"/><rect x="1" y="9" width="14" height="6.5" fill="#60b070"/><ellipse cx="4" cy="12.2" rx="2.8" ry="2.6" fill="#d8fcd8"/><ellipse cx="12" cy="12.2" rx="2.8" ry="2.6" fill="#d8fcd8"/><rect x="7" y="9.5" width="2" height="5.5" fill="#80c890"/></svg>
<svg style="left:150px;top:76px" width="16" height="16" viewBox="0 0 16 16"><path d="M0.5 12 L3 9.5 H15.5 V13 L13 15.5 H0.5 Z" fill="#f4f0c8" stroke="#7a7040" stroke-width="0.8"/><rect x="0.5" y="12" width="12.5" height="3.5" fill="#e0dca8" stroke="#6a6030" stroke-width="0.6"/><path d="M1 10 L5 3.5 H11 L8 10 Z" fill="#2a3aa0"/><path d="M3 8 H7 M4 6 H8 M5 4.5 H9" stroke="#80c0f0" stroke-width="0.9" stroke-dasharray="1 1"/><path d="M8 10 L12 3 L14 4 L11 10 Z" fill="#7a7a40"/><path d="M12 3 C13 1 15 1 15 0" stroke="#111" stroke-width="1.2" fill="none"/><ellipse cx="6" cy="1.8" rx="2.5" ry="1.5" fill="#fff" stroke="#aaa" stroke-width="0.5"/><rect x="5" y="2.5" width="2.5" height="1.2" fill="#111"/><rect x="10" y="4.5" width="1.4" height="2" fill="#e01010"/><rect x="5" y="13.2" width="3" height="0.8" fill="#d08020"/></svg>
<svg style="left:172px;top:89px" width="7" height="4" viewBox="0 0 7 4"><path d="M0 0 H6 L3 3.5 Z" fill="#4a3a1a"/></svg>
<svg style="left:183px;top:73px" width="1" height="21" viewBox="0 0 1 21"><rect x="0" y="0" width="1" height="1" fill="#c8bc9a"/><rect x="0" y="20" width="1" height="1" fill="#c8bc9a"/></svg>
<svg style="left:188px;top:77px" width="2" height="14" viewBox="0 0 2 14"><rect x="0" y="0" width="3" height="1" fill="#c4b48a"/><rect x="0" y="2" width="3" height="1" fill="#c4b48a"/><rect x="0" y="4" width="3" height="1" fill="#c4b48a"/><rect x="0" y="6" width="3" height="1" fill="#c4b48a"/><rect x="0" y="8" width="3" height="1" fill="#c4b48a"/><rect x="0" y="10" width="3" height="1" fill="#c4b48a"/><rect x="0" y="12" width="3" height="1" fill="#c4b48a"/></svg>
<svg style="left:198px;top:76px" width="16" height="16" viewBox="0 0 16 16"><path d="M1 4 L3.5 1.5 H6 V11.5 L3.5 14 H1 Z" fill="#f07a10"/><path d="M5 2.5 L7.5 0 H9.5 V10 L7 12.5 H5 Z" fill="#f8d010"/><path d="M2 6 H4 M2 8.5 H4 M2 11 H4" stroke="#f8b060" stroke-width="0.8"/><path d="M6 4.5 H8 M6 7 H8 M6 9.5 H8" stroke="#fff080" stroke-width="0.8"/><path d="M7.5 13 V9 C7.5 7 16.5 7 16.5 9 V13 Z" fill="#3a70d0" stroke="#1a3a90" stroke-width="0.7"/><path d="M10.5 7 L12 9 L13.5 7 Z" fill="#fff"/><circle cx="12" cy="4.5" r="2.4" fill="#f8c8a0" stroke="#6a2010" stroke-width="0.8"/><path d="M3.5 17 V13 C3.5 11 12.5 11 12.5 13 V17 Z" fill="#e02030" stroke="#a01010" stroke-width="0.7"/><path d="M6.5 11 L8 13 L9.5 11 Z" fill="#fff"/><circle cx="8" cy="8.5" r="2.4" fill="#f8c8a0" stroke="#6a2010" stroke-width="0.8"/></svg>
<svg style="left:220px;top:76px" width="16" height="16" viewBox="0 0 16 16"><path d="M1 4 L3.5 1.5 H6 V11.5 L3.5 14 H1 Z" fill="#f07a10"/><path d="M5 2.5 L7.5 0 H9.5 V10 L7 12.5 H5 Z" fill="#f8d010"/><path d="M2 6 H4 M2 8.5 H4 M2 11 H4" stroke="#f8b060" stroke-width="0.8"/><path d="M6 4.5 H8 M6 7 H8 M6 9.5 H8" stroke="#fff080" stroke-width="0.8"/><path d="M6.5 12 V8 C6.5 6 15.5 6 15.5 8 V12 Z" fill="#2a50d0" stroke="#1a2a90" stroke-width="0.7"/><path d="M9.5 6 L11 8 L12.5 6 Z" fill="#fff"/><circle cx="11" cy="3.5" r="2.4" fill="#f8c8a0" stroke="#6a2010" stroke-width="0.8"/><path d="M0.5 10 H12 L10 14.5 H3 Z" fill="#fff" stroke="#333" stroke-width="1.3"/><path d="M3 11.5 H10 M2.5 13 H10.5 M5 10 V14.5 M8 10 V14.5" stroke="#666" stroke-width="0.5"/><path d="M12 10 L14 7" stroke="#333" stroke-width="1.2"/><circle cx="4" cy="15.5" r="1" fill="#333"/><circle cx="9" cy="15.5" r="1" fill="#333"/></svg>
<svg style="left:243px;top:76px" width="16" height="16" viewBox="0 0 16 16"><path d="M1 4 L3.5 1.5 H6 V11.5 L3.5 14 H1 Z" fill="#f07a10"/><path d="M5 2.5 L7.5 0 H9.5 V10 L7 12.5 H5 Z" fill="#f8d010"/><path d="M2 6 H4 M2 8.5 H4 M2 11 H4" stroke="#f8b060" stroke-width="0.8"/><path d="M6 4.5 H8 M6 7 H8 M6 9.5 H8" stroke="#fff080" stroke-width="0.8"/><path d="M6.5 11 V7 C6.5 5 15.5 5 15.5 7 V11 Z" fill="#e02030" stroke="#a01010" stroke-width="0.7"/><path d="M9.5 5 L11 7 L12.5 5 Z" fill="#fff"/><circle cx="11" cy="2.5" r="2.4" fill="#f8c8a0" stroke="#6a2010" stroke-width="0.8"/><path d="M0.5 10 H12 L10 14.5 H3 Z" fill="#fff" stroke="#333" stroke-width="1.3"/><path d="M3 11.5 H10 M2.5 13 H10.5 M5 10 V14.5 M8 10 V14.5" stroke="#666" stroke-width="0.5"/><path d="M12 10 L14 7" stroke="#333" stroke-width="1.2"/><circle cx="4" cy="15.5" r="1" fill="#333"/><circle cx="9" cy="15.5" r="1" fill="#333"/></svg>
<svg style="left:266px;top:76px" width="16" height="16" viewBox="0 0 16 16"><path d="M1 4 L3.5 1.5 H6 V11.5 L3.5 14 H1 Z" fill="#f07a10"/><path d="M5 2.5 L7.5 0 H9.5 V10 L7 12.5 H5 Z" fill="#f8d010"/><path d="M2 6 H4 M2 8.5 H4 M2 11 H4" stroke="#f8b060" stroke-width="0.8"/><path d="M6 4.5 H8 M6 7 H8 M6 9.5 H8" stroke="#fff080" stroke-width="0.8"/><ellipse cx="11" cy="14.0" rx="3" ry="1.3" fill="#f8d020" stroke="#6a4800" stroke-width="0.9"/><ellipse cx="11" cy="11.8" rx="3" ry="1.3" fill="#f8d020" stroke="#6a4800" stroke-width="0.9"/><ellipse cx="11" cy="9.6" rx="3" ry="1.3" fill="#f8d020" stroke="#6a4800" stroke-width="0.9"/><ellipse cx="11" cy="7.3999999999999995" rx="3" ry="1.3" fill="#f8d020" stroke="#6a4800" stroke-width="0.9"/></svg>
<svg style="left:289px;top:76px" width="16" height="16" viewBox="0 0 16 16"><path d="M1 4 L3.5 1.5 H6 V11.5 L3.5 14 H1 Z" fill="#f07a10"/><path d="M5 2.5 L7.5 0 H9.5 V10 L7 12.5 H5 Z" fill="#f8d010"/><path d="M2 6 H4 M2 8.5 H4 M2 11 H4" stroke="#f8b060" stroke-width="0.8"/><path d="M6 4.5 H8 M6 7 H8 M6 9.5 H8" stroke="#fff080" stroke-width="0.8"/><path d="M4 15.5 V8 H6 V15.5 M8 15.5 V6 H10 V15.5 M12 15.5 V3 H14 V15.5" fill="#a0a0a0" stroke="#666" stroke-width="0.6"/><rect x="2" y="13" width="13" height="3" fill="#909090"/></svg>
<svg style="left:312px;top:76px" width="16" height="16" viewBox="0 0 16 16"><path d="M1 4 L3.5 1.5 H6 V11.5 L3.5 14 H1 Z" fill="#f07a10"/><path d="M5 2.5 L7.5 0 H9.5 V10 L7 12.5 H5 Z" fill="#f8d010"/><path d="M2 6 H4 M2 8.5 H4 M2 11 H4" stroke="#f8b060" stroke-width="0.8"/><path d="M6 4.5 H8 M6 7 H8 M6 9.5 H8" stroke="#fff080" stroke-width="0.8"/><rect x="6" y="11" width="10" height="3" fill="#777" stroke="#444" stroke-width="0.5"/><path d="M8 12.5 H14" stroke="#ccc" stroke-dasharray="1 1"/></svg>
<svg style="left:335px;top:76px" width="16" height="16" viewBox="0 0 16 16"><path d="M1 4 L3.5 1.5 H6 V11.5 L3.5 14 H1 Z" fill="#f07a10"/><path d="M5 2.5 L7.5 0 H9.5 V10 L7 12.5 H5 Z" fill="#f8d010"/><path d="M2 6 H4 M2 8.5 H4 M2 11 H4" stroke="#f8b060" stroke-width="0.8"/><path d="M6 4.5 H8 M6 7 H8 M6 9.5 H8" stroke="#fff080" stroke-width="0.8"/><ellipse cx="9" cy="14.0" rx="3" ry="1.3" fill="#f8d020" stroke="#6a4800" stroke-width="0.9"/><ellipse cx="9" cy="11.8" rx="3" ry="1.3" fill="#f8d020" stroke="#6a4800" stroke-width="0.9"/><ellipse cx="9" cy="9.6" rx="3" ry="1.3" fill="#f8d020" stroke="#6a4800" stroke-width="0.9"/><rect x="11" y="14" width="5" height="1.5" fill="#f0c830"/></svg>
<div class="a" style="left:357px;top:73px;width:1px;height:21px;background:linear-gradient(#ece5d9,#c8bb90 25%,#c8bb90 75%,#ece5d9)"></div>
<div class="a" style="left:358px;top:73px;width:1px;height:21px;background:linear-gradient(#ece5d9,#faf7ef 25%,#faf7ef 75%,#ece5d9)"></div>
<svg style="left:363px;top:76px" width="16" height="16" viewBox="0 0 16 16"><path d="M0.5 0.5 H8 L11.5 3.5 V13.5 H0.5 Z" fill="#fff" stroke="#3a80c8"/><path d="M2 6.5 H9 M2 9 H9" stroke="#30b0f0" stroke-width="1"/><path d="M6.5 13 V9 C6.5 7 15.5 7 15.5 9 V13 Z" fill="#2a60d0" stroke="#1a2a90" stroke-width="0.7"/><path d="M9.5 7 L11 9 L12.5 7 Z" fill="#fff"/><circle cx="11" cy="4.5" r="2.4" fill="#f8c8a0" stroke="#6a2010" stroke-width="0.8"/><path d="M0.5 10 H12 L10 14.5 H3 Z" fill="#fff" stroke="#333" stroke-width="1.3"/><path d="M3 11.5 H10 M2.5 13 H10.5 M5 10 V14.5 M8 10 V14.5" stroke="#666" stroke-width="0.5"/><path d="M12 10 L14 7" stroke="#333" stroke-width="1.2"/><circle cx="4" cy="15.5" r="1" fill="#333"/><circle cx="9" cy="15.5" r="1" fill="#333"/></svg>
<svg style="left:386px;top:76px" width="16" height="16" viewBox="0 0 16 16"><path d="M0 1 L1 0 H9 V3 L8 4 H0 Z" fill="#101060"/><rect x="0" y="1" width="8" height="3" fill="#3a2ad0"/><path d="M1.5 2.5 H7" stroke="#f0e040" stroke-width="1" stroke-dasharray="1 1"/><path d="M3 4.5 L6 2.5 L9.5 7 L11 5.5 L11.5 12 L5 11.5 L6.8 10 Z" fill="#80d020" stroke="#205a10" stroke-width="0.7"/><path d="M9.5 11.0 L11.0 9.5 H15.5 V14.0 L14.0 15.5 H9.5 Z" fill="#a00000"/><rect x="9.5" y="11.0" width="4.5" height="4.5" fill="#f01010"/></svg>
<svg style="left:408px;top:76px" width="16" height="16" viewBox="0 0 16 16"><path d="M0.5 0.5 H8 L11.5 3.5 V13.5 H0.5 Z" fill="#fff" stroke="#3a80c8"/><path d="M2 6.5 H9 M2 9 H9" stroke="#30b0f0" stroke-width="1"/><path d="M6.5 13 V9 C6.5 7 15.5 7 15.5 9 V13 Z" fill="#e02030" stroke="#a01010" stroke-width="0.7"/><path d="M9.5 7 L11 9 L12.5 7 Z" fill="#fff"/><circle cx="11" cy="4.5" r="2.4" fill="#f8c8a0" stroke="#6a2010" stroke-width="0.8"/><path d="M0.5 10 H12 L10 14.5 H3 Z" fill="#fff" stroke="#333" stroke-width="1.3"/><path d="M3 11.5 H10 M2.5 13 H10.5 M5 10 V14.5 M8 10 V14.5" stroke="#666" stroke-width="0.5"/><path d="M12 10 L14 7" stroke="#333" stroke-width="1.2"/><circle cx="4" cy="15.5" r="1" fill="#333"/><circle cx="9" cy="15.5" r="1" fill="#333"/></svg>
<svg style="left:431px;top:76px" width="16" height="16" viewBox="0 0 16 16"><path d="M0 1.5 L1.5 0 H6 V4.5 L4.5 6 H0 Z" fill="#a00000"/><rect x="0" y="1.5" width="4.5" height="4.5" fill="#f01010"/><path d="M3 4.5 L6 2.5 L9.5 7 L11 5.5 L11.5 12 L5 11.5 L6.8 10 Z" fill="#80d020" stroke="#205a10" stroke-width="0.7"/><path d="M6 13 L7 12 H15 V15 L14 16 H6 Z" fill="#101060"/><rect x="6" y="13" width="8" height="3" fill="#3a2ad0"/><path d="M7.5 14.5 H13" stroke="#f0e040" stroke-width="1" stroke-dasharray="1 1"/></svg>
<svg style="left:454px;top:76px" width="16" height="16" viewBox="0 0 16 16"><path d="M0 1.5 L1.5 0 H6 V4.5 L4.5 6 H0 Z" fill="#a00000"/><rect x="0" y="1.5" width="4.5" height="4.5" fill="#f01010"/><path d="M3 4.5 L6 2.5 L9.5 7 L11 5.5 L11.5 12 L5 11.5 L6.8 10 Z" fill="#80d020" stroke="#205a10" stroke-width="0.7"/><path d="M6 13 L7 12 H15 V15 L14 16 H6 Z" fill="#1a50c0"/><rect x="6" y="13" width="8" height="3" fill="#2a70f0"/><path d="M7.5 14.5 H13" stroke="#fff" stroke-width="1.2" stroke-dasharray="1.2 0.8"/></svg>
<svg style="left:478px;top:76px" width="16" height="16" viewBox="0 0 16 16"><ellipse cx="3.5" cy="15.0" rx="3" ry="1.3" fill="#f8d020" stroke="#6a4800" stroke-width="0.9"/><ellipse cx="3.5" cy="12.8" rx="3" ry="1.3" fill="#f8d020" stroke="#6a4800" stroke-width="0.9"/><ellipse cx="3.5" cy="10.6" rx="3" ry="1.3" fill="#f8d020" stroke="#6a4800" stroke-width="0.9"/><ellipse cx="3.5" cy="8.399999999999999" rx="3" ry="1.3" fill="#f8d020" stroke="#6a4800" stroke-width="0.9"/><ellipse cx="3.5" cy="6.199999999999999" rx="3" ry="1.3" fill="#f8d020" stroke="#6a4800" stroke-width="0.9"/><ellipse cx="10.5" cy="15.0" rx="3" ry="1.3" fill="#f8d020" stroke="#6a4800" stroke-width="0.9"/><ellipse cx="10.5" cy="12.8" rx="3" ry="1.3" fill="#f8d020" stroke="#6a4800" stroke-width="0.9"/><ellipse cx="10.5" cy="10.6" rx="3" ry="1.3" fill="#f8d020" stroke="#6a4800" stroke-width="0.9"/><path d="M5 4 C6 0 12 0 13 4" stroke="#1a3a80" stroke-width="1.1" fill="none"/><path d="M11 3 L13 5.5 L15 3" stroke="#1a3a80" stroke-width="1.1" fill="none"/></svg>
<svg style="left:500px;top:76px" width="16" height="16" viewBox="0 0 16 16"><path d="M1.5 0.5 H8 L11.5 3.5 V12.5 H1.5 Z" fill="#fff" stroke="#999"/><path d="M3 6.5 H9 M3 9 H9" stroke="#30b0f0" stroke-width="1"/><rect x="5" y="8.5" width="10" height="7" fill="#e0f0d0" stroke="#30a030"/><ellipse cx="10" cy="14.0" rx="3" ry="1.3" fill="#f8d020" stroke="#6a4800" stroke-width="0.9"/><ellipse cx="10" cy="11.8" rx="3" ry="1.3" fill="#f8d020" stroke="#6a4800" stroke-width="0.9"/></svg>
<svg style="left:523px;top:76px" width="16" height="16" viewBox="0 0 16 16"><path d="M1 1 L2 0 H10 V3 L9 4 H1 Z" fill="#101060"/><rect x="1" y="1" width="8" height="3" fill="#3a2ad0"/><path d="M2.5 2.5 H8" stroke="#f0e040" stroke-dasharray="1 1"/><path d="M4 4 L7 4 L7 8 L9 7 L8 12 L3 10 L5 9 Z" fill="#80d020" stroke="#205a10" stroke-width="0.7"/><path d="M7 12 L8 11 H16 V14 L15 15 H7 Z" fill="#803000"/><rect x="7" y="12" width="8" height="3" fill="#f07a30"/><path d="M8.5 13.5 H14" stroke="#fff0c0" stroke-dasharray="1 1"/></svg>
<svg style="left:547px;top:76px" width="16" height="16" viewBox="0 0 16 16"><path d="M0.5 0.5 H9 L12.5 3.5 V13.5 H0.5 Z" fill="#fff" stroke="#3a80c8"/><path d="M2 6.5 H10 M2 9 H10" stroke="#30b0f0" stroke-width="1"/><path d="M4 8 C6 5 11 6 11 9" stroke="#2a4a80" fill="none"/><ellipse cx="11" cy="15.0" rx="3" ry="1.3" fill="#f8d020" stroke="#6a4800" stroke-width="0.9"/><ellipse cx="11" cy="12.8" rx="3" ry="1.3" fill="#f8d020" stroke="#6a4800" stroke-width="0.9"/><ellipse cx="11" cy="10.6" rx="3" ry="1.3" fill="#f8d020" stroke="#6a4800" stroke-width="0.9"/></svg>
<svg style="left:570px;top:76px" width="16" height="16" viewBox="0 0 16 16"><path d="M4.5 1.5 H12 L15.5 4.5 V14.5 H4.5 Z" fill="#fff" stroke="#3a80c8"/><path d="M6 7.5 H13 M6 10 H13" stroke="#30b0f0" stroke-width="1"/><ellipse cx="4" cy="7.0" rx="3" ry="1.3" fill="#f8d020" stroke="#6a4800" stroke-width="0.9"/><ellipse cx="4" cy="4.8" rx="3" ry="1.3" fill="#f8d020" stroke="#6a4800" stroke-width="0.9"/><ellipse cx="4" cy="2.5999999999999996" rx="3" ry="1.3" fill="#f8d020" stroke="#6a4800" stroke-width="0.9"/><path d="M4 9 C3 12 6 14 8 13" stroke="#1a3a80" stroke-width="1" fill="none"/><path d="M2.5 10 L4 8.5 L5.5 10" stroke="#1a3a80" fill="none"/></svg>
<svg style="left:593px;top:76px" width="16" height="16" viewBox="0 0 16 16"><path d="M0 4 H6 M3 1 V7" stroke="#20c020" stroke-width="2.5"/><path d="M5 7 H13 L15.5 9.5 V16 H5 Z" fill="#c8c8c8" stroke="#999" stroke-width="0.6"/><ellipse cx="11" cy="15.0" rx="3" ry="1.3" fill="#f8d020" stroke="#6a4800" stroke-width="0.9"/><ellipse cx="11" cy="12.8" rx="3" ry="1.3" fill="#f8d020" stroke="#6a4800" stroke-width="0.9"/><ellipse cx="11" cy="10.6" rx="3" ry="1.3" fill="#f8d020" stroke="#6a4800" stroke-width="0.9"/></svg>
<svg style="left:616px;top:76px" width="16" height="16" viewBox="0 0 16 16"><path d="M0 4 H7" stroke="#20c020" stroke-width="2.5"/><path d="M5 7 H13 L15.5 9.5 V16 H5 Z" fill="#c8c8c8" stroke="#999" stroke-width="0.6"/><ellipse cx="11" cy="15.0" rx="3" ry="1.3" fill="#f8d020" stroke="#6a4800" stroke-width="0.9"/><ellipse cx="11" cy="12.8" rx="3" ry="1.3" fill="#f8d020" stroke="#6a4800" stroke-width="0.9"/><ellipse cx="11" cy="10.6" rx="3" ry="1.3" fill="#f8d020" stroke="#6a4800" stroke-width="0.9"/></svg>
<svg style="left:639px;top:76px" width="16" height="16" viewBox="0 0 16 16"><path d="M1.5 0.5 H9 L12.5 3.5 V12.5 H1.5 Z" fill="#fff" stroke="#3a80c8"/><path d="M3 6.5 H10 M3 9 H10" stroke="#30b0f0" stroke-width="1"/><ellipse cx="4" cy="15.0" rx="3" ry="1.3" fill="#f8d020" stroke="#6a4800" stroke-width="0.9"/><ellipse cx="4" cy="12.8" rx="3" ry="1.3" fill="#f8d020" stroke="#6a4800" stroke-width="0.9"/><path d="M8 9 L11 12 L16 6" stroke="#20b020" stroke-width="2.2" fill="none"/></svg>
<svg style="left:662px;top:76px" width="16" height="16" viewBox="0 0 16 16"><path d="M0.5 0.5 H8 L11.5 3.5 V13.5 H0.5 Z" fill="#fff" stroke="#3a80c8"/><path d="M2 6.5 H9 M2 9 H9" stroke="#30b0f0" stroke-width="1"/><ellipse cx="7" cy="13.0" rx="3" ry="1.3" fill="#f8d020" stroke="#6a4800" stroke-width="0.9"/><ellipse cx="7" cy="10.8" rx="3" ry="1.3" fill="#f8d020" stroke="#6a4800" stroke-width="0.9"/><ellipse cx="7" cy="8.6" rx="3" ry="1.3" fill="#f8d020" stroke="#6a4800" stroke-width="0.9"/><ellipse cx="7" cy="6.3999999999999995" rx="3" ry="1.3" fill="#f8d020" stroke="#6a4800" stroke-width="0.9"/><ellipse cx="13" cy="15.0" rx="3" ry="1.3" fill="#f8d020" stroke="#6a4800" stroke-width="0.9"/><ellipse cx="13" cy="12.8" rx="3" ry="1.3" fill="#f8d020" stroke="#6a4800" stroke-width="0.9"/></svg>
<svg style="left:685px;top:76px" width="16" height="16" viewBox="0 0 16 16"><path d="M0.5 0.5 H8 L11.5 3.5 V13.5 H0.5 Z" fill="#fff" stroke="#3a80c8"/><path d="M2 6.5 H9 M2 9 H9" stroke="#30b0f0" stroke-width="1"/><path d="M6 15 L14 7" stroke="#20a020" stroke-width="1.6"/><circle cx="7" cy="9" r="1.7" fill="#20a020"/><circle cx="13" cy="14" r="1.7" fill="#20a020"/></svg>
<svg style="left:708px;top:76px" width="16" height="16" viewBox="0 0 16 16"><path d="M0.5 0.5 H8 L11.5 3.5 V12.5 H0.5 Z" fill="#fff" stroke="#3a80c8"/><path d="M2 6.5 H9 M2 9 H9" stroke="#30b0f0" stroke-width="1"/><path d="M6.5 14 V10 C6.5 8 15.5 8 15.5 10 V14 Z" fill="#e02030" stroke="#a01010" stroke-width="0.7"/><path d="M9.5 8 L11 10 L12.5 8 Z" fill="#fff"/><circle cx="11" cy="5.5" r="2.4" fill="#f8c8a0" stroke="#6a2010" stroke-width="0.8"/><path d="M1.5 18 V14 C1.5 12 10.5 12 10.5 14 V18 Z" fill="#2a50d0" stroke="#1a2a90" stroke-width="0.7"/><path d="M4.5 12 L6 14 L7.5 12 Z" fill="#fff"/><circle cx="6" cy="9.5" r="2.4" fill="#f8c8a0" stroke="#6a2010" stroke-width="0.8"/></svg>
<svg style="left:732px;top:76px" width="16" height="16" viewBox="0 0 16 16"><rect x="0.5" y="0.5" width="15" height="15" rx="3" fill="#3ab040" stroke="#1a6a20"/><rect x="2" y="2" width="12" height="12" rx="2" fill="#58c858"/><path d="M5 3.5 V12 H9 M5 7.5 H9" stroke="#2a5ab0" fill="none"/><rect x="3.5" y="2.5" width="3" height="2.5" fill="#a8e0f8" stroke="#2a5ab0" stroke-width="0.6"/><rect x="9" y="6.5" width="3.5" height="2.5" fill="#a8e0f8" stroke="#2a5ab0" stroke-width="0.6"/><rect x="9" y="10.5" width="3.5" height="2.5" fill="#a8e0f8" stroke="#2a5ab0" stroke-width="0.6"/></svg>
<svg style="left:754px;top:76px" width="16" height="16" viewBox="0 0 16 16"><rect x="1.5" y="7.5" width="12" height="8" fill="#f4f6f8" stroke="#9aa8b8" stroke-width="0.8"/><path d="M3 10.5 H12 M3 12.5 H12" stroke="#a8b4c0" stroke-width="0.7"/><path d="M1 7 L5 3 C7 1 10 1 12 3 L15 2.5 V6 L11 8 L8 6 L4 9 Z" fill="#e8b890" stroke="#8a6040" stroke-width="0.6"/><rect x="13" y="1.5" width="2.5" height="5" fill="#fff" stroke="#8898a8" stroke-width="0.5"/></svg>
<svg style="left:776px;top:89px" width="7" height="4" viewBox="0 0 7 4"><path d="M0 0 H6 L3 3.5 Z" fill="#4a3a1a"/></svg>
<svg style="left:787px;top:73px" width="1" height="21" viewBox="0 0 1 21"><rect x="0" y="0" width="1" height="1" fill="#c8bc9a"/><rect x="0" y="20" width="1" height="1" fill="#c8bc9a"/></svg>
<svg style="left:792px;top:77px" width="2" height="14" viewBox="0 0 2 14"><rect x="0" y="0" width="3" height="1" fill="#c4b48a"/><rect x="0" y="2" width="3" height="1" fill="#c4b48a"/><rect x="0" y="4" width="3" height="1" fill="#c4b48a"/><rect x="0" y="6" width="3" height="1" fill="#c4b48a"/><rect x="0" y="8" width="3" height="1" fill="#c4b48a"/><rect x="0" y="10" width="3" height="1" fill="#c4b48a"/><rect x="0" y="12" width="3" height="1" fill="#c4b48a"/></svg>
<svg style="left:801px;top:76px" width="16" height="16" viewBox="0 0 16 16"><path d="M0.5 1.5 H9 L11.5 4 V13.5 H0.5 Z" fill="#f4f4f4" stroke="#aaa"/><rect x="0" y="13" width="12" height="1.5" fill="#666"/><text x="1.3" y="11" font-size="9.5" font-family="Liberation Sans" fill="#222">Σ</text><path d="M7.5 14 V10 C7.5 8 16.5 8 16.5 10 V14 Z" fill="#3a70d0" stroke="#1a3a90" stroke-width="0.7"/><path d="M10.5 8 L12 10 L13.5 8 Z" fill="#fff"/><circle cx="12" cy="5.5" r="2.4" fill="#f8c8a0" stroke="#6a2010" stroke-width="0.8"/><rect x="8" y="11" width="5.5" height="5" fill="#e01020"/></svg>
<svg style="left:824px;top:76px" width="16" height="16" viewBox="0 0 16 16"><path d="M0.5 1.5 H9 L11.5 4 V13.5 H0.5 Z" fill="#f4f4f4" stroke="#aaa"/><rect x="0" y="13" width="12" height="1.5" fill="#666"/><text x="1.3" y="11" font-size="9.5" font-family="Liberation Sans" fill="#222">Σ</text><path d="M7.5 14 V10 C7.5 8 16.5 8 16.5 10 V14 Z" fill="#e02030" stroke="#a01010" stroke-width="0.7"/><path d="M10.5 8 L12 10 L13.5 8 Z" fill="#fff"/><circle cx="12" cy="5.5" r="2.4" fill="#f8c8a0" stroke="#6a2010" stroke-width="0.8"/><rect x="9" y="11" width="6" height="5" fill="#1a40c0"/></svg>
<svg style="left:847px;top:76px" width="16" height="16" viewBox="0 0 16 16"><path d="M0.5 1.5 H9 L11.5 4 V13.5 H0.5 Z" fill="#f4f4f4" stroke="#aaa"/><rect x="0" y="13" width="12" height="1.5" fill="#666"/><text x="1.3" y="11" font-size="9.5" font-family="Liberation Sans" fill="#222">Σ</text><path d="M7.5 13 V9 C7.5 7 16.5 7 16.5 9 V13 Z" fill="#3a70d0" stroke="#1a3a90" stroke-width="0.7"/><path d="M10.5 7 L12 9 L13.5 7 Z" fill="#fff"/><circle cx="12" cy="4.5" r="2.4" fill="#f8c8a0" stroke="#6a2010" stroke-width="0.8"/><path d="M3.5 16 V12 C3.5 10 12.5 10 12.5 12 V16 Z" fill="#e02030" stroke="#a01010" stroke-width="0.7"/><path d="M6.5 10 L8 12 L9.5 10 Z" fill="#fff"/><circle cx="8" cy="7.5" r="2.4" fill="#f8c8a0" stroke="#6a2010" stroke-width="0.8"/></svg>
<svg style="left:870px;top:76px" width="16" height="16" viewBox="0 0 16 16"><path d="M0.5 1.5 H9 L11.5 4 V13.5 H0.5 Z" fill="#f4f4f4" stroke="#aaa"/><rect x="0" y="13" width="12" height="1.5" fill="#666"/><text x="1.3" y="11" font-size="9.5" font-family="Liberation Sans" fill="#222">Σ</text><rect x="10" y="2" width="5" height="5" fill="#e01020"/><path d="M9.5 3 V14" stroke="#666"/><rect x="6" y="12" width="10" height="4" fill="#2a2aa0"/><path d="M7.5 14 H15" stroke="#fff" stroke-dasharray="1 1"/></svg>
<svg style="left:893px;top:76px" width="16" height="16" viewBox="0 0 16 16"><path d="M0.5 1.5 H9 L11.5 4 V13.5 H0.5 Z" fill="#f4f4f4" stroke="#aaa"/><rect x="0" y="13" width="12" height="1.5" fill="#666"/><text x="1.3" y="11" font-size="9.5" font-family="Liberation Sans" fill="#222">Σ</text><rect x="10" y="0" width="5" height="5" fill="#e01020"/><path d="M9.5 1 V12" stroke="#666"/><rect x="8" y="11" width="7" height="5" fill="#d08010" stroke="#603000" stroke-width="0.6"/></svg>
<svg style="left:916px;top:76px" width="16" height="16" viewBox="0 0 16 16"><path d="M0.5 1.5 H9 L11.5 4 V13.5 H0.5 Z" fill="#f4f4f4" stroke="#aaa"/><rect x="0" y="13" width="12" height="1.5" fill="#666"/><text x="1.3" y="11" font-size="9.5" font-family="Liberation Sans" fill="#222">Σ</text><rect x="10" y="2" width="5" height="5" fill="#e01020"/><rect x="7" y="11" width="9" height="5" fill="#2a6ad0"/><path d="M8.5 13.5 H15" stroke="#fff" stroke-dasharray="1.5 1"/></svg>
<svg style="left:939px;top:76px" width="16" height="16" viewBox="0 0 16 16"><path d="M0.5 1.5 H9 L11.5 4 V13.5 H0.5 Z" fill="#f4f4f4" stroke="#aaa"/><rect x="0" y="13" width="12" height="1.5" fill="#666"/><text x="1.3" y="11" font-size="9.5" font-family="Liberation Sans" fill="#222">Σ</text><rect x="8.5" y="4.5" width="7" height="11" fill="#e8e8e8" stroke="#777"/><path d="M10 7 H14 M10 9 H14 M10 11 H14 M10 13 H14" stroke="#777"/></svg>
<svg style="left:962px;top:76px" width="16" height="16" viewBox="0 0 16 16"><path d="M0.5 1.5 H9 L11.5 4 V13.5 H0.5 Z" fill="#f4f4f4" stroke="#aaa"/><rect x="0" y="13" width="12" height="1.5" fill="#666"/><text x="1.3" y="11" font-size="9.5" font-family="Liberation Sans" fill="#222">Σ</text><path d="M7 10 L10 13 L15.5 7" stroke="#20b020" stroke-width="2.4" fill="none"/></svg>
<svg style="left:985px;top:89px" width="7" height="4" viewBox="0 0 7 4"><path d="M0 0 H6 L3 3.5 Z" fill="#4a3a1a"/></svg>
<svg style="left:995px;top:73px" width="1" height="21" viewBox="0 0 1 21"><rect x="0" y="0" width="1" height="1" fill="#c8bc9a"/><rect x="0" y="20" width="1" height="1" fill="#c8bc9a"/></svg></body></html>
